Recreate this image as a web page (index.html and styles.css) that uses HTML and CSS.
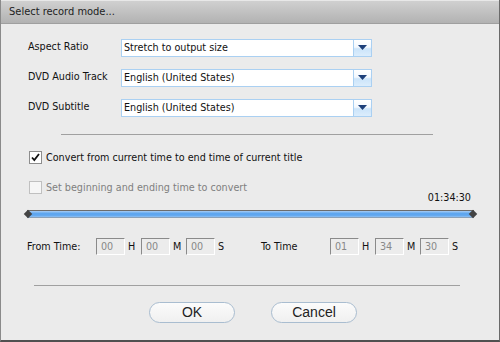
FILE: index.html
```html
<!DOCTYPE html>
<html>
<head>
<meta charset="utf-8">
<link rel="stylesheet" href="styles.css">
</head>
<body>
<div class="win">
  <div class="title">Select record mode...</div>
  <div class="content">
    <div class="rows">
      <div class="row"><span class="lbl">Aspect Ratio</span><div class="combo"><span class="val">Stretch to output size</span><span class="btn"><svg width="9" height="5" viewBox="0 0 9 5"><path d="M0 0H9L4.5 5Z" fill="#1b3f7a"/></svg></span></div></div>
      <div class="row"><span class="lbl">DVD Audio Track</span><div class="combo"><span class="val">English (United States)</span><span class="btn"><svg width="9" height="5" viewBox="0 0 9 5"><path d="M0 0H9L4.5 5Z" fill="#1b3f7a"/></svg></span></div></div>
      <div class="row"><span class="lbl">DVD Subtitle</span><div class="combo"><span class="val">English (United States)</span><span class="btn"><svg width="9" height="5" viewBox="0 0 9 5"><path d="M0 0H9L4.5 5Z" fill="#1b3f7a"/></svg></span></div></div>
    </div>
    <div class="sep sep1"></div>
    <div class="check"><span class="box on"><svg width="11" height="11" viewBox="0 0 11 11"><path d="M2 5.5L4.3 8L9 2" stroke="#111" stroke-width="1.8" fill="none"/></svg></span><span>Convert from current time to end time of current title</span></div>
    <div class="check dis"><span class="box"></span><span>Set beginning and ending time to convert</span></div>
    <div class="dur">01:34:30</div>
    <div class="slider"><span class="thumb l"></span><span class="thumb r"></span></div>
    <div class="times">
      <span class="tl">From Time:</span>
      <span class="f">00</span><span class="u">H</span><span class="f">00</span><span class="u">M</span><span class="f">00</span><span class="u">S</span>
      <span class="tl to">To Time</span>
      <span class="f">01</span><span class="u">H</span><span class="f">34</span><span class="u">M</span><span class="f">30</span><span class="u">S</span>
    </div>
    <div class="sep sep2"></div>
    <div class="buttons"><span class="pill">OK</span><span class="pill">Cancel</span></div>
  </div>
</div>
</body>
</html>
```
FILE: styles.css
```css
html, body { margin: 0; padding: 0; }
body { width: 500px; height: 342px; overflow: hidden; font-family: "DejaVu Sans Condensed", "DejaVu Sans", sans-serif; font-size: 10.7px; color: #111; }
.win { width: 500px; height: 342px; box-sizing: border-box; background: #ebebeb; border-left: 1px solid #8a8a8a; border-right: 1px solid #6a6a6a; border-bottom: 2px solid #505050; display: flex; flex-direction: column; }
.title { height: 24px; box-sizing: border-box; border-top: 1px solid #e8e8e8; background: linear-gradient(#d0d0d0, #b2b2b2); border-bottom: 1px solid #9f9f9f; padding-left: 8px; line-height: 22px; font-size: 11px; color: #222; }
.content { position: relative; flex: 1; }
.rows { display: flex; flex-direction: column; gap: 12px; padding-top: 15px; }
.row { display: flex; align-items: center; height: 18px; }
.lbl { width: 93px; padding-left: 27px; position: relative; top: -2px; }
.combo { width: 251px; height: 18px; box-sizing: border-box; border: 1px solid #aad0f2; background: #fff; display: flex; }
.val { flex: 1; line-height: 16px; padding-left: 2px; }
.btn { width: 17px; height: 16px; border-left: 1px solid #aad0f2; background: linear-gradient(#ffffff 0%, #f2f8fe 45%, #cbe4fa 55%, #dcedfc 100%); display: flex; align-items: center; justify-content: center; }
.btn svg { position: relative; top: -1px; }
.sep { height: 1px; background: #a0a0a0; }
.sep1 { margin: 17px 66px 0 60px; }
.check { display: flex; align-items: center; gap: 4px; padding-left: 28px; height: 14px; margin-top: 15px; }
.check.dis { color: #7f7f7f; margin-top: 16px; }
.box { width: 13px; height: 13px; box-sizing: border-box; border: 1px solid #8d8d8d; background: #fff; display: flex; align-items: center; justify-content: center; }
.dis .box { border-color: #c0c0c0; background: #f6f6f6; }
.dur { text-align: right; padding-right: 28px; margin-top: -3px; height: 13px; line-height: 13px; }
.slider { position: relative; margin: 6px 25px 0 26px; height: 8px; box-sizing: border-box; border-top: 1px solid #6c6c6c; border-bottom: 1px solid #8aa0b8; background: linear-gradient(#a8cdf5, #5ea6ef 40%, #5ea6ef 70%, #8ec0f3); }
.thumb { position: absolute; top: 0; width: 6px; height: 6px; background: #444; transform: rotate(45deg); }
.thumb.l { left: -2px; }
.thumb.r { right: -2px; }
.times { display: flex; align-items: center; height: 17px; margin-top: 20px; padding-left: 26px; }
.tl { width: 69px; }
.tl.to { width: 69px; margin-left: 30px; }
.f { width: 29px; height: 17px; box-sizing: border-box; border: 1px solid #8a8a8a; border-right-color: #fff; border-bottom-color: #fff; background: #ececec; color: #888; line-height: 15px; padding-left: 4px; }
.u { width: 16px; padding-left: 3px; box-sizing: border-box; }
.sep2 { margin: 30px 39px 0 33px; }
.buttons { display: flex; justify-content: center; gap: 36px; margin-top: 16px; padding-left: 6px; }
.pill { width: 86px; height: 21px; box-sizing: border-box; border: 1px solid #a9bdd0; border-radius: 11px; background: linear-gradient(#fbfbfb, #f0f0f0); font-family: "Liberation Sans", Arial, sans-serif; font-size: 14px; color: #222; text-align: center; line-height: 19px; }
```
